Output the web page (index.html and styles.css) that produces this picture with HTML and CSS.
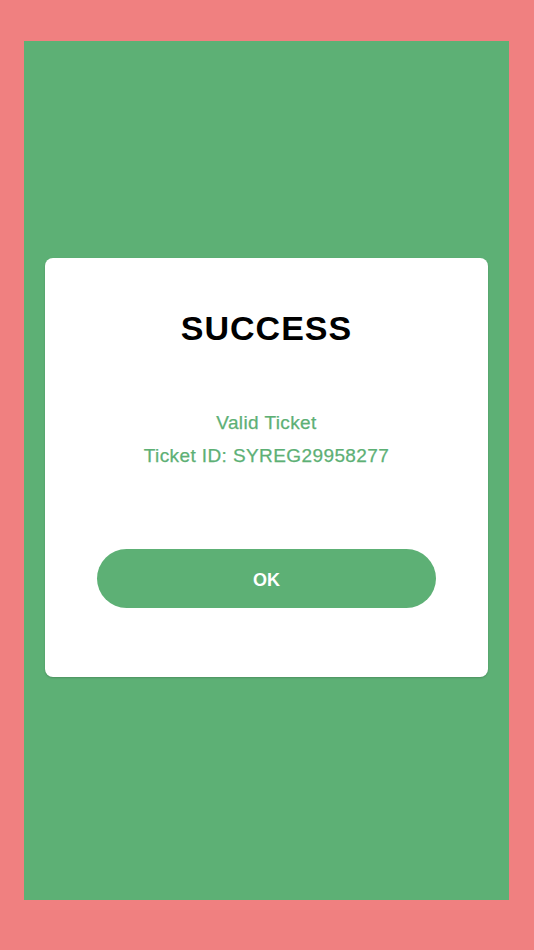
FILE: index.html
```html
<!DOCTYPE html>
<html>
<head>
<meta charset="utf-8">
<link rel="stylesheet" href="styles.css">
</head>
<body>
<div class="frame">
  <div class="screen">
    <div class="card">
      <h1 class="title">SUCCESS</h1>
      <div class="info">
        <p class="line">Valid Ticket</p>
        <p class="line">Ticket ID: SYREG29958277</p>
      </div>
      <button class="ok">OK</button>
    </div>
  </div>
</div>
</body>
</html>
```

FILE: styles.css
```css
html, body {
  margin: 0;
  padding: 0;
}
body {
  background: #f08080;
  font-family: "Liberation Sans", Arial, sans-serif;
  width: 534px;
  height: 950px;
  overflow: hidden;
}
.frame {
  padding: 41px 25px 50px 24px;
}
.screen {
  background: #5db075;
  height: 859px;
  padding-top: 217px;
  box-sizing: border-box;
}
.card {
  margin-left: 21px;
  width: 443px;
  background: #ffffff;
  border-radius: 8px;
  box-shadow: 0 1px 2px rgba(0, 0, 0, 0.18);
  padding: 50px 0 69px;
  box-sizing: border-box;
  display: flex;
  flex-direction: column;
  align-items: center;
}
.title {
  margin: 0;
  font-size: 34px;
  line-height: 40px;
  font-weight: 700;
  letter-spacing: 1px;
  color: #000000;
}
.info {
  margin-top: 58px;
  display: flex;
  flex-direction: column;
  align-items: center;
}
.line {
  margin: 0;
  font-size: 19px;
  line-height: 33px;
  letter-spacing: 0.4px;
  color: #5db075;
  -webkit-text-stroke: 0.25px #5db075;
}
.ok {
  margin-top: 77px;
  width: 339px;
  height: 59px;
  border: none;
  border-radius: 30px;
  background: #5db075;
  color: #ffffff;
  font-family: "Liberation Sans", Arial, sans-serif;
  font-size: 18px;
  font-weight: 700;
  padding: 3px 0 0;
}
```
